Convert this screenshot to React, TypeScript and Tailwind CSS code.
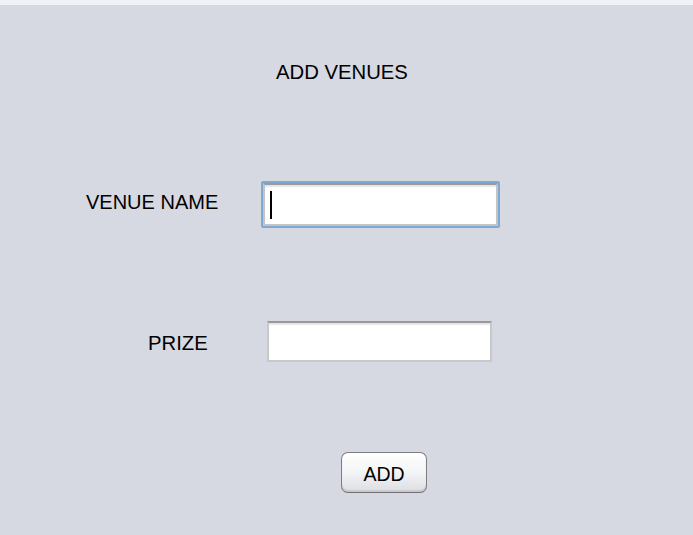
import React from "react";

export default function App() {
  return (
    <div
      className="w-[693px] h-[535px] flex flex-col overflow-hidden"
      style={{ fontFamily: '"Liberation Sans", Arial, sans-serif' }}
    >
      <div className="h-[5px] bg-[#f1f2f7] shrink-0" />
      <div className="flex-1 bg-[#d6d9e1] flex flex-col text-black">
        <div className="mt-[55px] pl-[276px] text-[20.3px] leading-[24px] h-[24px]">
          ADD VENUES
        </div>

        <div className="mt-[97px] flex items-start h-[47px]">
          <div className="ml-[86px] w-[175px] mt-[9px] text-[20px] leading-[24px]">
            VENUE NAME
          </div>
          <div className="w-[239px] h-[47px] border-[2px] border-[#7fa8d3] rounded-[2px] p-0">
            <div className="w-full h-full border-[2px] border-[#c4c4c4] border-t-[#9a9a9a] bg-white shadow-[inset_0_2px_1px_#e6e6e6] flex items-center">
              <span className="ml-[5px] w-[2px] h-[28px] bg-black" />
            </div>
          </div>
        </div>

        <div className="mt-[93px] flex items-start h-[41px]">
          <div className="ml-[148px] w-[119px] mt-[10px] text-[20.3px] leading-[24px]">
            PRIZE
          </div>
          <div className="w-[225px] h-[41px] border-[2px] border-[#c8c8c8] border-t-[#999999] bg-white shadow-[inset_0_2px_1px_#e6e6e6]" />
        </div>

        <div className="mt-[90px] flex">
          <button className="ml-[341px] w-[86px] h-[41px] rounded-[7px] border-[1.5px] border-[#7f7f7f] border-b-[#6f6f6f] bg-gradient-to-b from-[#ffffff] via-[#f3f4f6] to-[#dcdee3] shadow-[inset_0_-2px_1px_#c8cacf] text-[19.5px] leading-[24px] pt-[3px] text-black">
            ADD
          </button>
        </div>
      </div>
    </div>
  );
}
